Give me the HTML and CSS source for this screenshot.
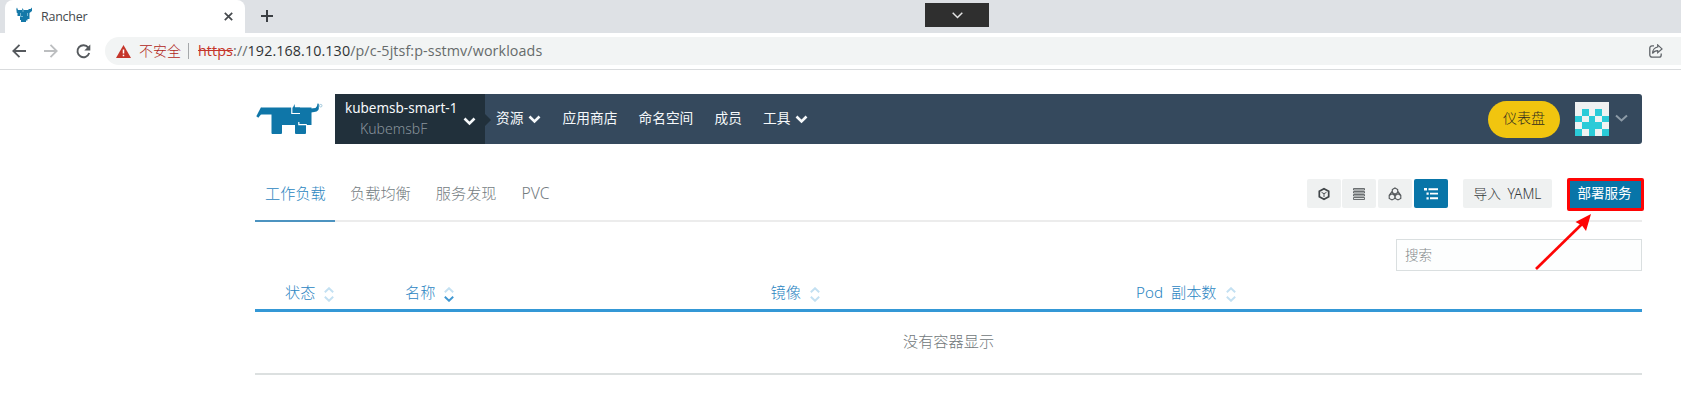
FILE: index.html
```html
<!DOCTYPE html>
<html lang="zh-CN">
<head>
<meta charset="utf-8">
<title>Rancher</title>
<link rel="stylesheet" href="styles.css">
</head>
<body>
<svg class="defs" width="0" height="0">
  <symbol id="chev" viewBox="0 0 13 9"><path d="M1.500 1.500l5 5 5-5" fill="none" stroke="currentColor" stroke-width="2.600"/></symbol>
  <symbol id="up" viewBox="0 0 10 6"><path d="M.8 5.200L5 1.200l4.200 4" fill="none" stroke="currentColor" stroke-width="1.900"/></symbol>
  <symbol id="down" viewBox="0 0 10 6"><path d="M.8.8L5 4.800 9.200.8" fill="none" stroke="currentColor" stroke-width="1.900"/></symbol>
</svg>

<header class="browser">
  <div class="tabstrip">
    <div class="tab">
      <svg class="favicon" width="17" height="17" viewBox="0 0 17 17"><path d="M1 .5l1 2.500h4l.5-2 1 2H12l1-1h1.500L16 .5V4l-2.500 2V12h-2v1.500H10V15H5v-2H4V9H1.500V6H.8L.3 2z" fill="#1478a8"/><path d="M4.500 6v3.500h2.500M7 2.500v2.500M11.500 6v3" fill="none" stroke="#8cc4dc" stroke-width=".8"/></svg>
      <span class="tab-title">Rancher</span>
      <svg class="tab-close" width="9" height="9" viewBox="0 0 9 9"><path d="M.8.8l7.400 7.400M8.200.8L.8 8.200" stroke="#45494d" stroke-width="1.700"/></svg>
    </div>
    <svg class="new-tab" width="12" height="12" viewBox="0 0 12 12"><path d="M6 0v12M0 6h12" stroke="#3b3f43" stroke-width="2"/></svg>
    <div class="window-handle"><svg width="11" height="7" viewBox="0 0 11 7"><path d="M.7.8l4.800 4.700L10.300.8" fill="none" stroke="#e4e4e4" stroke-width="1.500"/></svg></div>
  </div>
  <div class="toolbar">
    <svg width="14" height="14" viewBox="0 0 14 14"><path d="M14 7H1.500M7.500.8L1.300 7l6.200 6.200" fill="none" stroke="#55595d" stroke-width="1.800"/></svg>
    <svg class="forward" width="14" height="14" viewBox="0 0 14 14"><path d="M0 7h12.500M6.500.8L12.700 7l-6.200 6.200" fill="none" stroke="#bcbec0" stroke-width="1.800"/></svg>
    <svg class="reload" width="15" height="15" viewBox="0 0 15 15"><path d="M12.300 3.600A6 6 0 1 0 13.200 9" fill="none" stroke="#55595d" stroke-width="1.900"/><path d="M14.300.5v6H8.300z" fill="#55595d"/></svg>
    <div class="omnibox">
      <svg width="15" height="13" viewBox="0 0 15 13"><path d="M7.500 0L15 13H0z" fill="#c5352a"/><path d="M7.500 4.500v4M7.500 9.800v1.500" stroke="#fff" stroke-width="1.500"/></svg>
      <span class="insecure">不安全</span>
      <span class="divider"></span>
      <span class="url"><s>https</s><i>://</i><b>192.168.10.130</b><i>/p/c-5jtsf:p-sstmv/workloads</i></span>
      <svg class="share" width="14" height="14" viewBox="0 0 14 14"><path d="M5 1.800H3a2.200 2.200 0 0 0-2.200 2.200v7A2.200 2.200 0 0 0 3 13.200h7a2.200 2.200 0 0 0 2.200-2.200v-1.500" fill="none" stroke="#5f6368" stroke-width="1.300"/><path d="M8.700.9L13 4.900 8.700 8.700V6.600C6.300 6.600 4.700 7.500 3.500 9.500 3.700 6 5.500 3.500 8.700 3z" fill="none" stroke="#5f6368" stroke-width="1.200"/></svg>
    </div>
  </div>
</header>

<main class="page">
  <div class="masthead">
    <svg class="logo" width="80" height="50" viewBox="0 0 80 50">
      <path d="M6 13.500H56.500V31H51v8q0 1-1 1H41q-1 0-1-1V31H27v8q0 1-1 1H17.500q-1 0-1-1V20.500H6z" fill="#0f76a8"/>
      <path d="M6 13.300L1.300 22.300l2 1.500L8 18z" fill="#0f76a8"/>
      <path d="M36.800 11v8.500H45M43.800 28v2.700h8" fill="none" stroke="#fff" stroke-width="1.200"/>
      <path d="M39.500 10L38 13.500v4.500h7V13.500h-5z" fill="#0f76a8"/>
      <path d="M56 14.500l4.500-.5q2-1.500 2-4.500l1.300.3V15q-.5 3-7.800 3.500z" fill="#0f76a8"/>
      <circle cx="65.700" cy="11.700" r="1.300" fill="none" stroke="#7fb4cf" stroke-width=".7"/>
    </svg>
    <nav class="nav">
      <div class="cluster">
        <div class="cluster-names"><span class="cluster-name">kubemsb-smart-1</span><span class="project-name">KubemsbF</span></div>
        <svg class="cluster-chev" width="13" height="9"><use href="#chev"/></svg>
      </div>
      <a class="nav-item first">资源<svg width="13" height="9"><use href="#chev"/></svg></a>
      <a class="nav-item">应用商店</a>
      <a class="nav-item">命名空间</a>
      <a class="nav-item">成员</a>
      <a class="nav-item">工具<svg width="13" height="9"><use href="#chev"/></svg></a>
      <a class="dashboard">仪表盘</a>
      <svg class="avatar" width="34" height="34" viewBox="0 0 5 5" shape-rendering="crispEdges"><path d="M0 0h5v5H0z" fill="#f0f2f2"/><path d="M1 1h1v1H1zM3 1h1v1H3zM0 2h1v1H0zM2 2h1v1H2zM4 2h1v1H4zM1 3h3v1H1zM0 4h1v1H0zM2 4h1v1H2zM4 4h1v1H4z" fill="#2bcbd8"/></svg>
      <svg class="user-chev" width="13" height="9" viewBox="0 0 13 9"><path d="M1 1.500l5.500 5 5.500-5" fill="none" stroke="#8d9ba7" stroke-width="2"/></svg>
    </nav>
  </div>

  <div class="subnav">
    <a class="sub active">工作负载</a>
    <a class="sub">负载均衡</a>
    <a class="sub">服务发现</a>
    <a class="sub latin">PVC</a>
    <div class="views">
      <button class="view"><svg width="14" height="14" viewBox="0 0 14 14"><path d="M7 1.700l4.700 2.600v5.400L7 12.300 2.300 9.700V4.300z" fill="none" stroke="#3f4447" stroke-width="1.700"/><path d="M4.500 5.300L7 6.700l2.500-1.400M7 6.700V10" fill="none" stroke="#3f4447" stroke-width=".9"/></svg></button>
      <button class="view"><svg width="14" height="14" viewBox="0 0 14 14"><path d="M1.500 1.500h11v1.500h-11zM1.500 4.500h11V6h-11zM1.500 7.500h11V9h-11zM1.500 10.500h11V12.500h-11z" fill="#dfe2e2" stroke="#5c6163" stroke-width=".9"/></svg></button>
      <button class="view"><svg width="14" height="14" viewBox="0 0 14 14"><path d="M7 1l2.700 1.500v3L7 7.200 4.300 5.500v-3zM4 6.800l2.800 1.600v3L4 12.900 1.200 11.400v-3zM10 6.800l2.800 1.600v3L10 12.900l-2.800-1.500v-3zM4.300 4L1.200 8.400M9.700 4l3.100 4.400" fill="none" stroke="#505457" stroke-width="1.100"/></svg></button>
      <button class="view selected"><svg width="14" height="14" viewBox="0 0 14 14"><path d="M0 1h3v2.500H0zM4.500 1.200H14v2H4.500zM2.500 5.500h2.200v2.200H2.500zM6 5.700h8v1.900H6zM2.500 10.300h2.200v2.200H2.500zM6 10.300h8v2H6z" fill="#fff"/></svg></button>
    </div>
    <button class="import">导入 YAML</button>
    <button class="deploy">部署服务</button>
  </div>

  <div class="search-row"><input class="search" type="text" placeholder="搜索"></div>

  <div class="table">
    <div class="thead">
      <span class="th state">状态<span class="sort"><svg width="10" height="6"><use href="#up"/></svg><svg width="10" height="6"><use href="#down"/></svg></span></span>
      <span class="th">名称<span class="sort"><svg width="10" height="6"><use href="#up"/></svg><svg class="on" width="10" height="6"><use href="#down"/></svg></span></span>
      <span class="th">镜像<span class="sort"><svg width="10" height="6"><use href="#up"/></svg><svg width="10" height="6"><use href="#down"/></svg></span></span>
      <span class="th pods">Pod 副本数<span class="sort"><svg width="10" height="6"><use href="#up"/></svg><svg width="10" height="6"><use href="#down"/></svg></span></span>
    </div>
    <div class="empty">没有容器显示</div>
  </div>
</main>
<svg class="pointer" width="62" height="62" viewBox="0 0 62 62"><path d="M3 58L49 13" stroke="#fe0505" stroke-width="2.700"/><path d="M58 3L53 20l-4-5.500-6.500-3.500z" fill="#fe0505"/></svg>
</body>
</html>
```

FILE: styles.css
```css
* { box-sizing: border-box; }
body { margin: 0; height: 414px; overflow: hidden; background: #fff; font-family: "Noto Sans", "Noto Sans CJK SC", sans-serif; font-weight: 300; position: relative; }
svg { display: block; flex: none; }
.defs { position: absolute; }
button { border: 0; margin: 0; padding: 0; font: inherit; }

.tabstrip { height: 33px; background: #dee1e5; display: flex; position: relative; }
.tab { margin-left: 5px; width: 240px; background: #fff; border-radius: 8px 8px 0 0; display: flex; align-items: center; padding: 0 12px 0 11px; }
.favicon { margin-top: -3px; }
.tab-title { margin-left: 8px; font: 400 12.500px/20px "Open Sans", sans-serif; color: #45494d; flex: 1; letter-spacing: -.25px; }
.tab-close { margin-top: -1px; }
.new-tab { margin: 10px 0 0 16px; }
.window-handle { position: absolute; left: 925px; top: 3px; width: 64px; height: 24px; background: #2f2f2f; display: flex; align-items: center; justify-content: center; }
.toolbar { height: 37px; border-bottom: 1px solid #d9dbdd; display: flex; align-items: center; padding-left: 12px; }
.forward { margin-left: 18px; }
.reload { margin-left: 18px; }
.omnibox { flex: 1; height: 28px; margin-left: 14px; background: #f2f4f4; border-radius: 14px 0 0 14px; display: flex; align-items: center; padding: 0 18px 0 10.500px; }
.insecure { margin-left: 8.500px; font-size: 14px; font-weight: 300; line-height: 20px; color: #b02418; width: 43px; white-space: nowrap; }
.divider { width: 1px; height: 16px; background: #a5a8aa; margin: 0 9px 0 6px; }
.url { font: 400 14.300px/20px "Open Sans", sans-serif; flex: 1; color: #666b6b; white-space: nowrap; letter-spacing: .1px; }
.url s { color: #c5352a; }
.url i { font-style: normal; }
.url b { font-weight: 400; color: #303335; }

.page { margin-left: 255px; width: 1387px; padding-top: 24px; }
.masthead { display: flex; height: 50px; }
.nav { flex: 1; background: #35495d; border-radius: 3px; display: flex; align-items: center; color: #f6f9fb; }
.cluster { position: relative; width: 150px; height: 50px; background: #21303b; display: flex; padding-left: 10px; }
.cluster::after { content: ""; position: absolute; left: 150px; top: 20px; border: 6px solid transparent; border-left-color: #21303b; border-right: 0; }
.cluster-names { width: 111px; display: flex; flex-direction: column; padding-top: 4px; }
.cluster-name { font: 400 13.500px/20px "Noto Sans", sans-serif; white-space: nowrap; }
.project-name { font: 300 14px/20px "Noto Sans", sans-serif; color: #8a959d; margin: 1px 0 0 15px; }
.cluster-chev { margin: 23px 0 0 7px; }
.nav-item { font-size: 13.700px; line-height: 20px; margin: -2px 0 0 21.200px; display: flex; align-items: center; gap: 5px; font-weight: 400; }
.nav-item.first { margin-left: 11px; }
.nav-item svg { margin-top: 2px; }
.dashboard { margin-left: auto; width: 72px; height: 37px; border-radius: 19px; background: #f1c50f; color: #2f2b1f; font-size: 14px; line-height: 34px; text-align: center; }
.avatar { margin-left: 15px; }
.user-chev { margin: -1px 14px 0 6px; }

.subnav { height: 78px; border-bottom: 2px solid #ececec; display: flex; align-items: flex-start; padding-top: 35px; }
.sub { height: 41px; font-size: 15.200px; line-height: 28px; color: #737c7f; padding: 0 10px; margin-right: 5px; white-space: nowrap; }
.sub.active { width: 80px; height: 43px; border-bottom: 2px solid #4c93c0; color: #2c86c0; }
.sub.latin { font-size: 15.700px; }
.views { margin-left: auto; display: flex; gap: 2px; }
.view { width: 34px; height: 29px; background: #eff1f1; border-radius: 2px; display: flex; align-items: center; justify-content: center; }
.view:first-child { margin-right: -1px; }
.view.selected { background: #0875a8; }
.import { margin-left: 15px; width: 89px; height: 29px; background: #eff1f1; border-radius: 2px; color: #35393b; font-size: 13.700px; line-height: 26px; word-spacing: 3px; }
.deploy { margin: -1px -2px 0 15px; width: 77px; height: 33px; background: #0875a8; color: #fff; border: 3px solid #fe0505; border-radius: 2px; font-size: 13.500px; font-weight: 400; line-height: 24px; padding: 0 2px 3px 0; }

.search-row { padding-top: 17px; display: flex; justify-content: flex-end; }
.search { width: 246px; height: 32px; border: 1px solid #dadfe0; background: #fdfefe; padding: 0 8px 3px; font: 300 13.500px "Noto Sans CJK SC", sans-serif; }
.search::placeholder { color: #7f8688; opacity: 1; }
.thead { display: grid; grid-template-columns: 150px 365.500px 365.500px 1fr; height: 41px; padding-top: 8px; border-bottom: 3px solid #3498d6; color: #2b85c2; }
.th { display: flex; font-size: 15.200px; line-height: 26px; }
.state { padding-left: 30px; }
.pods { word-spacing: 4px; }
.sort { margin: 8px 0 0 9px; display: flex; flex-direction: column; gap: 3px; color: #c3e0f2; }
.sort .on { color: #3f97d2; }
.empty { height: 63px; border-bottom: 2px solid #dce0e0; text-align: center; font-size: 15.200px; line-height: 58px; color: #70777a; }
.pointer { position: absolute; left: 1533px; top: 211px; }
```
